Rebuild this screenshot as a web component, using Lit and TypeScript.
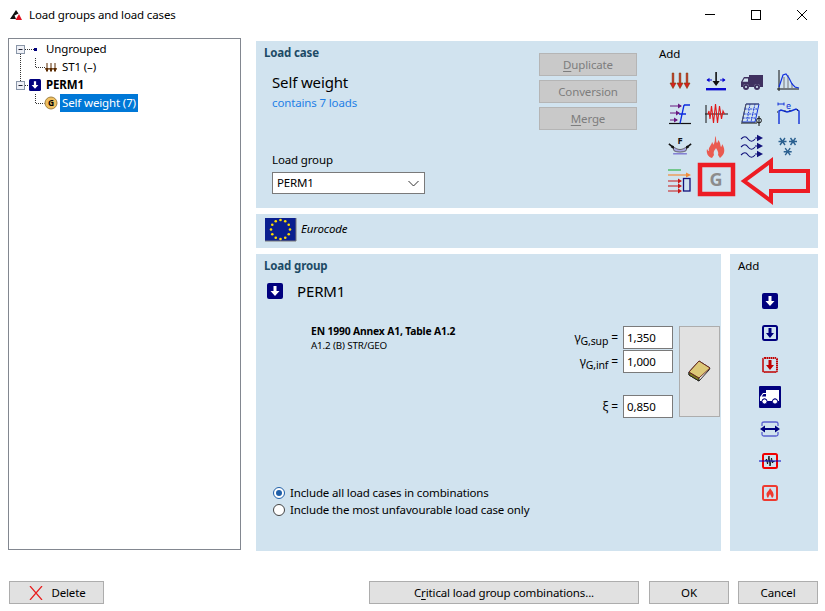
import { LitElement, html, svg, css } from "lit";
import { customElement } from "lit/decorators.js";

const i = (w: number, body: unknown, h = w) => html`<svg class="ic" width=${w} height=${h} viewBox="0 0 ${w} ${h}">${body}</svg>`;
const ic24 = (body: unknown) => i(24, body);

const arrow3 = ic24(svg`<g fill="#d82020" stroke="#7a4000" stroke-width="0.6"><path d="M4.200 4h1.600v10h2.200l-3 5.500-3-5.500h2.200z"/><path d="M11.200 4h1.600v10h2.200l-3 5.500-3-5.500h2.200z"/><path d="M18.200 4h1.600v10h2.200l-3 5.500-3-5.500h2.200z"/></g>`);
const thermalSettle = ic24(svg`<rect x="2" y="19" width="20" height="2.400" fill="#0a0ad0"/><path d="M11.300 3h1.600v9h2.800l-3.600 5-3.600-5h2.800z" fill="#111"/><path d="M3 11h5M21 11h-5" stroke="#0a0ad0" stroke-width="1"/><path d="M2.500 11l3-2.200v4.400zM21.500 11l-3-2.200v4.400z" fill="#0a0ad0"/>`);
const truck = ic24(svg`<path d="M9 6h14v12H20a3 3 0 0 0-6 0H9a3 3 0 0 0-6 0H1v-5l3-5h5z" fill="#3f3160"/><path d="M4.400 9.500H8v3.200H2.600z" fill="#d1e3ef"/><circle cx="6" cy="18" r="3" fill="#3f3160"/><circle cx="6" cy="18" r="1.100" fill="#d1e3ef"/><circle cx="17" cy="18" r="3" fill="#3f3160"/><circle cx="17" cy="18" r="1.100" fill="#d1e3ef"/>`);
const spectrum = ic24(svg`<path d="M3 1v21M1 20h22" stroke="#111" fill="none"/><path d="M8 8v12M12 6v14M16 14v6M20 18v2" stroke="#777"/><path d="M3 18L7 6 10 5 13 9 16 15 19 18 23 19" stroke="#1030e0" fill="none" stroke-width="1.200"/>`);
const windWall = ic24(svg`<path d="M1 21.500h22" stroke="#111" stroke-width="1.200"/><path d="M16 3h6M16 3l-4 18.500M11 12h7" stroke="#0a2be0" stroke-width="1.300" fill="none"/><g stroke="#6a1a80" stroke-width="1.200"><path d="M2 4h11M2 11h9M2 18h7"/></g><path d="M14 4l-4-2.500v5zM12 11l-4-2.500v5zM10 18l-4-2.500v5z" fill="#6a1a80"/>`);
const seismic = ic24(svg`<path d="M1 12h23" stroke="#111"/><path d="M2 3v18" stroke="#111"/><path d="M4 12l1-3 1 8 1.500-13 2 17 2-19 2 19 2-17 2 13 1.500-8 1.500 3" stroke="#e01818" fill="none" stroke-width="1.100"/>`);
const gridIc = ic24(svg`<path d="M5 7h13M4 12h13M3 16h13M10 2L7 20M15 2l-4 18" stroke="#1030d8" stroke-dasharray="1.600 1" fill="none"/><path d="M6 2h13l-4 18H2z" fill="none" stroke="#1030d8"/><path d="M6 2h13M6 2L2 20" fill="none" stroke="#555"/><path d="M19 14v10" stroke="#111"/><circle cx="19" cy="18.500" r="2.400" fill="none" stroke="#111"/><path d="M1 21h16" stroke="#111"/>`);
const portal = ic24(svg`<path d="M2 2h6M2 0.500v3M8 0.500v3" stroke="#1030d8" fill="none"/><text x="10" y="7" class="e0">e</text><path d="M3 22V9l2-1 6 2 4-1 5-2 3 2v13" stroke="#1030d8" fill="none" stroke-width="1.400"/><path d="M1 10h2M21 8h2M9 9.500v-2M14 9v-2" stroke="#111" stroke-dasharray="1 1"/>`);
const beam = html`<svg class="ic" width="24" height="21" viewBox="0 0 28 24"><path d="M5 11c6 6 12 6 18 0l-2 6c-4 2-10 2-14 0z" fill="#a9a6e4" stroke="#555"/><path d="M6 20.500h16" stroke="#7a74d0" stroke-width="1.600"/><path d="M1 9l5 4M27 9l-5 4" stroke="#111" stroke-width="1.800"/><path d="M7 15l-.3-4-3.500 2zM21 15l.3-4 3.500 2z" fill="#111"/><text x="14" y="9" text-anchor="middle" class="ft">F</text></svg>`;
const fire = ic24(svg`<path d="M11 1c2 3 .5 5 2 7 1-1 1-2 1-3 3 3 2 5 3 7 1-1 1-2 1-3 3 4 3 9 0 12l-2 2-2-3c1-3-1-5-2-7-1 2-3 3-2 7l-2 3c-4-1-6-5-5-9 .8 1 1 2 2 2-1-4 3-6 3-9 1 1 1 2 1 3 2-2 2-5 2-9z" fill="#ea5a50"/>`);
const wave = (y: number) => svg`<path d="M1 ${y}c3-3 5-3 7 0s5 3 7 0" fill="none" stroke="#10107a" stroke-width="1.100"/><path d="M15 ${y - 1}h3" stroke="#10107a"/><path d="M23 ${y - 1}l-6-3.200v6.400z" fill="#10107a"/>`;
const wind = ic24(svg`${wave(4)}${wave(12)}${wave(20)}`);
const flake = (x: number, y: number) => svg`<path d="M${x - 4} ${y}h8M${x - 2.5} ${y - 3.5}l5 7M${x + 2.5} ${y - 3.5}l-5 7" stroke="#2a6090" stroke-width="1.400"/>`;
const snow = ic24(svg`${flake(6.5, 6.5)}${flake(17, 6.5)}${flake(11.7, 16.7)}`);
const fireLoad = ic24(svg`<path d="M0 2h13" stroke="#32b44a" stroke-width="1.200"/><path d="M0 7h20" stroke="#f28c3a" stroke-width="1.200"/><path d="M23 7l-5-2.500v5z" fill="#f28c3a"/><g stroke="#c81818" stroke-width="1.200"><path d="M0 13h12M0 18h12M0 23h12" /></g><path d="M14 13l-4-2.500v5zM14 18l-4-2.500v5zM14 23l-4-2.500v5z" fill="#c81818"/><rect x="15.500" y="10.500" width="6.500" height="12.500" fill="none" stroke="#10107a" stroke-width="1.300"/>`);

const solidBlue = html`<svg class="ic" width="16" height="16" viewBox="0 0 16 16"><rect width="16" height="16" rx="2" fill="#00007e"/><path d="M6.500 3h3v5H12.500l-4.500 5-4.500-5h3z" fill="#fff"/></svg>`;
const outlineBlue = html`<svg class="ic" width="16" height="16" viewBox="0 0 16 16"><rect x="1" y="1" width="14" height="14" rx="1.500" fill="#d1e3ef" stroke="#00007e" stroke-width="2"/><path d="M6.500 3h3v5H12l-4 5-4-5h2.500z" fill="#00007e"/></svg>`;
const outlineRed = html`<svg class="ic" width="16" height="16" viewBox="0 0 16 16"><rect x="1" y="1" width="14" height="14" rx="1.500" fill="#d1e3ef" stroke="#c00000" stroke-width="2" stroke-dasharray="1.500 .5"/><path d="M6.500 3h3v5H12l-4 5-4-5h2.500z" fill="#c00000"/></svg>`;
const truckBlue = html`<svg class="ic" width="22" height="22" viewBox="0 0 22 22"><rect width="22" height="22" rx="1" fill="#00007e"/><path d="M7 4h13v11h-1.500a2.500 2.500 0 0 0-5 0H8a2.500 2.500 0 0 0-5 0H1v-4l3-4h3z" fill="#fff"/><path d="M4.500 8H7v2.500H2.700z" fill="#00007e"/><circle cx="5.500" cy="15.500" r="2.600" fill="#fff" stroke="#00007e"/><circle cx="16" cy="15.500" r="2.600" fill="#fff" stroke="#00007e"/></svg>`;
const accidental = html`<svg class="ic" width="22" height="16" viewBox="0 0 22 16"><path d="M3 5V2.500Q3 1 5 1h12q2 0 2 1.500V5M3 11v2.500Q3 15 5 15h12q2 0 2-1.500V11" fill="none" stroke="#5a60d0" stroke-width="1.300"/><path d="M1 8l5-3.500V7h10V4.500L21 8l-5 3.500V9H6v2.500z" fill="#00007e"/></svg>`;
const seismicRed = html`<svg class="ic" width="22" height="16" viewBox="0 0 22 16"><rect x="4" y="1" width="14" height="14" rx="1.500" fill="#d1e3ef" stroke="#f00000" stroke-width="2"/><path d="M6.500 8l1-2 1 5 1.500-8 1 10 1.500-8 1 5 1-2 1 1" fill="none" stroke="#111" stroke-width=".9"/><path d="M0 8h22" stroke="#0000c0" stroke-width="1"/></svg>`;
const fireRed = html`<svg class="ic" width="16" height="16" viewBox="0 0 16 16"><rect x="1" y="1" width="14" height="14" rx="1.500" fill="#d1e3ef" stroke="#ee3a30" stroke-width="2"/><path d="M8 3c1 2 3 3 3.500 6S10 13 10 13l-1-2-1-2-1 2-1 2s-1.500-1-1.500-4C4.500 7 7 6 8 3z" fill="#ee3a30"/></svg>`;

const stars = Array.from({ length: 12 }, (_, k) => {
  const a = (k * Math.PI) / 6;
  return svg`<circle cx=${15.5 + 9.5 * Math.cos(a)} cy=${11.5 + 9.5 * Math.sin(a)} r="1.300" fill="#ffdd00"/>`;
});

const expander = (cx: number, cy: number) => svg`<rect x=${cx - 3.5} y=${cy - 3.5} width="8" height="8" fill="#eef0f6" stroke="#8a96a8"/><path d="M${cx - 1.5} ${cy + 0.5}h4" stroke="#223"/>`;

@customElement("app-root")
export class AppRoot extends LitElement {
  static styles = css`
    :host { display: block; width: 825px; height: 611px; background: #fff; position: relative; overflow: hidden;
      font-family: "Noto Sans", "Open Sans", sans-serif; font-size: 11.5px; letter-spacing: -0.14px; color: #000; line-height: 16px; }
    * { box-sizing: border-box; }
    .ic { display: block; flex: none; overflow: visible; }
    .ic .e0 { font-size: 9px; fill: #1030d8; font-family: "Noto Sans", sans-serif; }
    .ic .ft { font-size: 11px; font-weight: 700; fill: #111; font-family: "Noto Sans", sans-serif; }
    .title { height: 30px; display: flex; align-items: center; padding: 0 0 0 10px; }
    .title .name { margin-left: 7px; }
    .title .ctl { margin-left: auto; display: flex; }
    .title .ctl div { width: 46px; height: 30px; display: flex; align-items: center; justify-content: center; }
    .body { display: flex; align-items: flex-start; height: 513px; margin-top: 8px; padding-left: 8px; }
    .tree { width: 233px; height: 512px; border: 1px solid #828790; padding-top: 1px; flex: none; }
    .row { display: flex; height: 18px; align-items: center; }
    .row.b { font-weight: 700; }
    .row span.sel { background: #0078d7; color: #fff; padding: 0 2px; height: 18px; line-height: 18px; white-space: nowrap; }
    .right { width: 562px; margin: 3px 0 0 15px; display: flex; flex-direction: column; gap: 6px; }
    .panel { background: #d1e3ef; }
    h3 { margin: 0; font-size: 11.5px; font-weight: 700; color: #1d4b66; line-height: 16px; }
    .case { height: 167px; display: flex; }
    .case .l { width: 283px; padding: 4px 0 0 8px; }
    .case .nm { font-size: 15px; line-height: 20px; margin: 11px 0 0 8px; }
    .case .ct { color: #1e7fe6; margin: 3px 0 0 8px; }
    .case .lg { margin: 41px 0 0 8px; }
    .select { margin: 4px 0 0 8px; width: 153px; height: 22px; background: #fff; border: 1px solid #7a7a7a; display: flex; align-items: center; justify-content: space-between; padding: 0 5px 0 4px; }
    .btns { width: 98px; padding-top: 12px; display: flex; flex-direction: column; gap: 4px; }
    .dis { height: 23px; background: #c9c9c9; border: 1px solid #b5b5b5; color: #7d7d7d; display: flex; align-items: center; justify-content: center; }
    .add { margin-left: 22px; padding-top: 5px; }
    .icons { display: grid; grid-template-columns: repeat(4, 36px); grid-auto-rows: 33px; margin: 2px 0 0 3px; }
    .icons > div { display: flex; align-items: center; justify-content: center; }
    .g { font-size: 18px; font-weight: 700; color: #8c8c8c; line-height: 33px; }
    .code { height: 34px; display: flex; align-items: center; padding: 0 0 3px 9px; }
    .code i { margin-left: 5px; margin-top: -2px; }
    .bottom { display: flex; gap: 9px; height: 297px; }
    .lgp { width: 465px; padding: 4px 0 0 8px; display: flex; flex-direction: column; }
    .pm { display: flex; align-items: center; margin: 7px 0 0 3px; height: 20px; font-size: 15px; gap: 14px; }
    .mid { display: flex; margin-top: 25px; }
    .std { margin: -1px 0 0 47px; line-height: 13px; width: 240px; flex: none; }
    .std b { display: block; font-size: 10.300px; }
    .std span { font-size: 9.800px; }
    .form { display: flex; width: 169px; gap: 6px; margin-left: auto; padding-right: 1px; }
    .fields { display: flex; flex-direction: column; gap: 1px; flex: 1; }
    .f { display: flex; justify-content: flex-end; align-items: center; height: 23px; gap: 5px; }
    .f.third { margin-top: 21px; }
    .f .lb { white-space: nowrap; font-size: 12px; }
    .f sub { font-size: 10.500px; line-height: 0; vertical-align: -3px; }
    .inp { width: 50px; height: 23px; background: #fff; border: 1px solid #7a7a7a; padding: 0 3px; line-height: 21px; flex: none; }
    .book { width: 41px; height: 91px; background: #e1e1e1; border: 1px solid #adadad; display: flex; align-items: center; justify-content: center; flex: none; }
    .radios { margin-top: 67px; margin-left: 9px; display: flex; flex-direction: column; gap: 1px; }
    .radio { display: flex; align-items: center; gap: 5px; height: 16px; }
    .rc { width: 12px; height: 12px; border-radius: 50%; border: 1px solid #444; background: #fff; display: flex; align-items: center; justify-content: center; flex: none; }
    .rc.on { border-color: #1f5fa8; }
    .rc.on::after { content: ""; width: 6px; height: 6px; border-radius: 50%; background: #1f5fa8; }
    .addg { width: 88px; padding: 4px 0 0 8px; }
    .vlist { display: flex; flex-direction: column; align-items: center; padding: 11px 8px 0 0; margin-left: -8px; }
    .vlist > div { height: 32px; display: flex; align-items: center; justify-content: center; }
    .foot { display: flex; padding: 30px 7px 0 9px; }
    .btn { height: 23px; background: #e1e1e1; border: 1px solid #adadad; display: flex; align-items: center; justify-content: center; }
    .btn.del { width: 95px; gap: 8px; padding-left: 2px; }
    .btn.crit { width: 270px; margin-left: auto; }
    .btn.ok { width: 80px; margin-left: 10px; }
    .btn.cancel { width: 80px; margin-left: 9px; }
    u { text-decoration-thickness: 1px; text-underline-offset: 2px; }
    .mark { position: absolute; left: 695px; top: 155px; pointer-events: none; }
  `;

  render() {
    return html`
      <div class="title">
        <svg class="ic" width="12" height="10" viewBox="0 0 12 10"><path d="M0 9L6 0l2.500 3.500-4 2 1.500 3.500z" fill="#111"/><path d="M5.500 10L9 4l3 6z" fill="#e01020"/></svg>
        <span class="name">Load groups and load cases</span>
        <div class="ctl">
          <div><svg width="10" height="2"><path d="M0 .5h10" stroke="#000"/></svg></div>
          <div><svg width="10" height="10"><rect x=".5" y=".5" width="9" height="9" fill="none" stroke="#000"/></svg></div>
          <div><svg width="10" height="10"><path d="M0 0l10 10M10 0L0 10" stroke="#000"/></svg></div>
        </div>
      </div>
      <div class="body">
        <div class="tree">
          <div class="row">
            <svg class="ic" width="37" height="18" viewBox="0 0 37 18"><path d="M11.500 14v4M16 9.500h9" fill="none" stroke="#333" stroke-dasharray="1 1"/>${expander(11, 9)}<rect x="25" y="8" width="3" height="3" fill="#00007e"/></svg>
            <span>Ungrouped</span>
          </div>
          <div class="row">
            <svg class="ic" width="53" height="18" viewBox="0 0 53 18"><path d="M11.500 0v18M26.500 0v9.500h10" fill="none" stroke="#333" stroke-dasharray="1 1"/><g stroke="#5a2a00" fill="#5a2a00"><path d="M38 5v8M42 5v8M46 5v8"/><path d="M36.500 10.500l1.500 3 1.500-3zM40.500 10.500l1.500 3 1.500-3zM44.500 10.500l1.500 3 1.500-3z"/></g></svg>
            <span>ST1 (–)</span>
          </div>
          <div class="row b">
            <svg class="ic" width="37" height="18" viewBox="0 0 37 18"><path d="M11.500 0v5M16 9.500h4" fill="none" stroke="#333" stroke-dasharray="1 1"/>${expander(11, 9)}<g transform="translate(20 3) scale(.75)"><rect width="16" height="16" rx="2" fill="#00007e"/><path d="M6.500 3h3v5H12.500l-4.500 5-4.500-5h3z" fill="#fff"/></g></svg>
            <span>PERM1</span>
          </div>
          <div class="row">
            <svg class="ic" width="51" height="18" viewBox="0 0 51 18"><path d="M26.500 0v9.500h9" fill="none" stroke="#333" stroke-dasharray="1 1"/><circle cx="42" cy="9" r="6" fill="#f0c060" stroke="#a08040"/><text x="42" y="12" text-anchor="middle" style="font-size:8.500px;font-weight:700">G</text></svg>
            <span class="sel">Self weight (7)</span>
          </div>
        </div>
        <div class="right">
          <div class="panel case">
            <div class="l">
              <h3>Load case</h3>
              <div class="nm">Self weight</div>
              <div class="ct">contains 7 loads</div>
              <div class="lg">Load group</div>
              <div class="select"><span>PERM1</span><svg width="11" height="7"><path d="M.5 1l5 5 5-5" fill="none" stroke="#333"/></svg></div>
            </div>
            <div class="btns">
              <div class="dis"><span><u>D</u>uplicate</span></div>
              <div class="dis">Conversion</div>
              <div class="dis"><span><u>M</u>erge</span></div>
            </div>
            <div class="add">
              <div>Add</div>
              <div class="icons">
                <div>${arrow3}</div><div>${thermalSettle}</div><div>${truck}</div><div>${spectrum}</div>
                <div>${windWall}</div><div>${seismic}</div><div>${gridIc}</div><div>${portal}</div>
                <div>${beam}</div><div>${fire}</div><div>${wind}</div><div>${snow}</div>
                <div>${fireLoad}</div><div class="g">G</div>
              </div>
            </div>
          </div>
          <div class="panel code">
            <svg class="ic" width="31" height="23" viewBox="0 0 31 23"><rect width="31" height="23" fill="#0a1f8f"/><path d="M31 0v23H0" fill="none" stroke="#777"/>${stars}</svg>
            <i>Eurocode</i>
          </div>
          <div class="bottom">
            <div class="panel lgp">
              <h3>Load group</h3>
              <div class="pm">${solidBlue}<span>PERM1</span></div>
              <div class="mid">
                <div class="std"><b>EN 1990 Annex A1, Table A1.2</b><span>A1.2 (B) STR/GEO</span></div>
                <div class="form">
                  <div class="fields">
                    <div class="f"><span class="lb">γ<sub>G,sup</sub> =</span><div class="inp">1,350</div></div>
                    <div class="f"><span class="lb">γ<sub>G,inf</sub> =</span><div class="inp">1,000</div></div>
                    <div class="f third"><span class="lb">ξ =</span><div class="inp">0,850</div></div>
                  </div>
                  <div class="book">
                    <svg class="ic" width="23" height="23" viewBox="0 0 23 23"><path d="M1 12L11 1l11 7-1 2-10 11-10-6z" fill="#fff" stroke="#222"/><path d="M1 12v3l10 6v-3z" fill="#7c7a1c" stroke="#222"/><path d="M1 12L11 1l11 7-11 10z" fill="#dcc878" stroke="#6a2a20"/></svg>
                  </div>
                </div>
              </div>
              <div class="radios">
                <div class="radio"><span class="rc on"></span><span>Include all load cases in combinations</span></div>
                <div class="radio"><span class="rc"></span><span>Include the most unfavourable load case only</span></div>
              </div>
            </div>
            <div class="panel addg">
              <div>Add</div>
              <div class="vlist">
                <div>${solidBlue}</div><div>${outlineBlue}</div><div>${outlineRed}</div><div>${truckBlue}</div><div>${accidental}</div><div>${seismicRed}</div><div>${fireRed}</div>
              </div>
            </div>
          </div>
        </div>
      </div>
      <div class="foot">
        <div class="btn del"><svg width="14" height="14"><path d="M1 0l12 14M13 0L1 14" stroke="#e81c1c" stroke-width="1.200"/></svg><span>Delete</span></div>
        <div class="btn crit"><span>C<u>r</u>itical load group combinations...</span></div>
        <div class="btn ok">OK</div>
        <div class="btn cancel">Cancel</div>
      </div>
      <svg class="mark" width="120" height="52" viewBox="695 155 120 52">
        <rect x="700" y="165" width="33" height="29" fill="none" stroke="#ed1c24" stroke-width="4.500"/>
        <path d="M744 181L771 161V171H808V191H771V201Z" fill="none" stroke="#ed1c24" stroke-width="4"/>
      </svg>
    `;
  }
}
